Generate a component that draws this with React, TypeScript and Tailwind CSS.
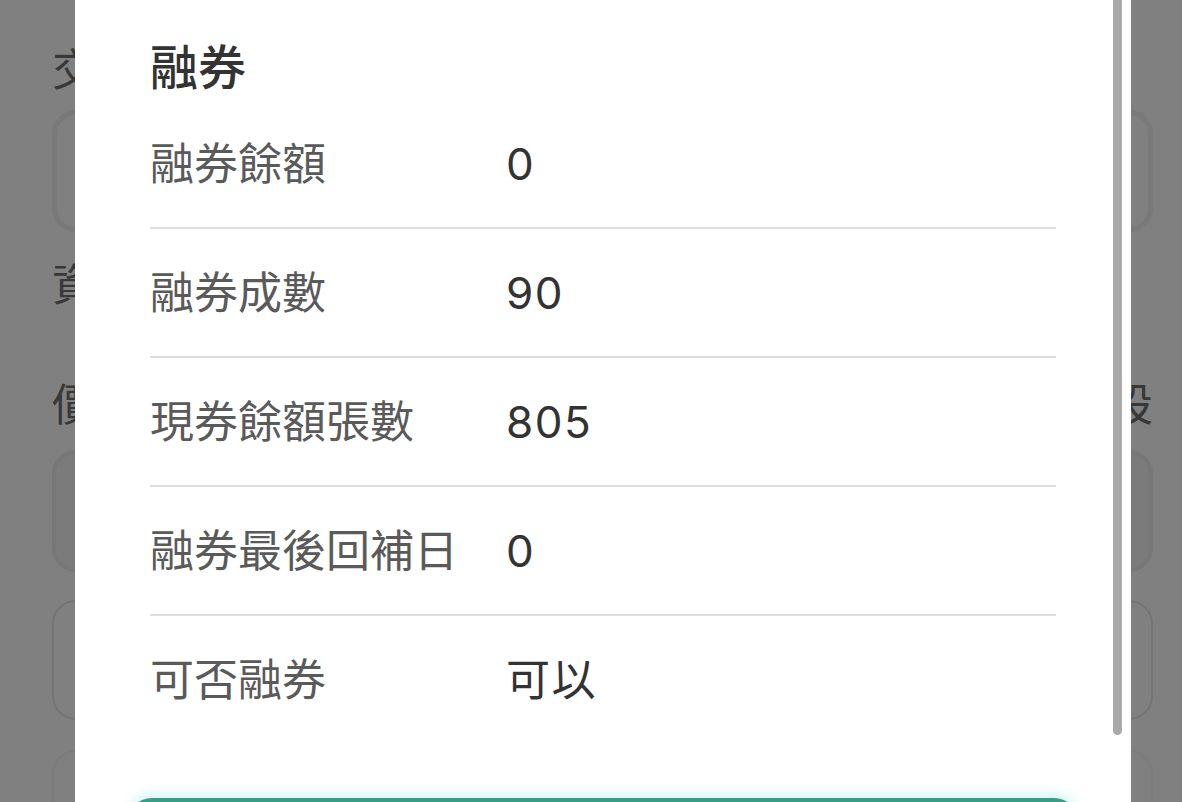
import React from "react";

const rows: { label: string; value: string }[] = [
  { label: "融券餘額", value: "0" },
  { label: "融券成數", value: "90" },
  { label: "現券餘額張數", value: "805" },
  { label: "融券最後回補日", value: "0" },
  { label: "可否融券", value: "可以" },
];

const font = { fontFamily: '"Inter", "Noto Sans CJK TC", sans-serif' };

export default function App() {
  return (
    <div
      className="relative w-[1182px] h-[802px] overflow-hidden bg-[#808080]"
      style={font}
    >
      {/* underlying page (dimmed) */}
      <div className="flex flex-col pl-[52px] pr-[29px] text-[#383838]">
        <div className="mt-[40px] h-[60px] text-[44px] leading-[60px]">交易</div>
        <div className="mt-[10px] h-[122px] rounded-[24px] border-[5px] border-[#797979]" />
        <div className="mt-[23px] h-[60px] text-[44px] leading-[60px]">資金</div>
        <div className="mt-[60px] flex h-[60px] items-center justify-between text-[44px] leading-[60px]">
          <span>價格</span>
          <span>預設</span>
        </div>
        <div className="mt-[15px] h-[122px] rounded-[24px] border-[4px] border-[#777777] bg-[#7b7b7b]" />
        <div className="mt-[28px] h-[120px] rounded-[24px] border-[2px] border-[#747474]" />
        <div className="mt-[30px] h-[120px] rounded-[24px] border-[2px] border-[#7c7c7c]" />
      </div>

      {/* modal */}
      <div className="absolute left-[75px] top-0 flex h-[802px] w-[1056px] flex-col bg-white">
        <div className="px-[75px]">
          <div className="mt-[36px] h-[64px] text-[48px] font-medium leading-[64px] text-[#333333]">
            融券
          </div>
          {rows.map((r, i) => (
            <div
              key={r.label}
              className={
                i < rows.length - 1
                  ? "flex h-[129px] items-center border-b-2 border-[#dedede]"
                  : "flex h-[127px] items-center"
              }
            >
              <div className="w-[356px] shrink-0 text-[44px] leading-[60px] text-[#5a5a5a]">
                {r.label}
              </div>
              <div className="text-[44px] leading-[60px] tracking-[1.5px] text-[#333333]">
                {r.value}
              </div>
            </div>
          ))}
        </div>
        <div className="mt-[55px] px-[53px]">
          <div className="h-[60px] rounded-t-[24px] bg-[#3a9c86] shadow-[0_-6px_10px_rgba(170,240,232,0.45)]" />
        </div>

        {/* scrollbar */}
        <div className="absolute right-[9px] top-0 h-[735px] w-[9px] rounded-b-full bg-[#a9a9a9]" />
      </div>
    </div>
  );
}
